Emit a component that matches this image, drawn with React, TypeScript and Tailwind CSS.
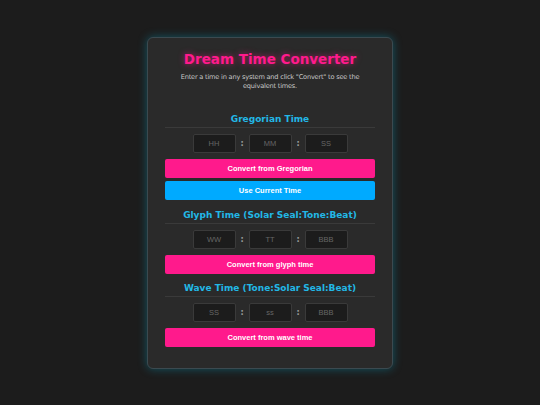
import React from "react";

const Inputs = ({ p }: { p: string[] }) => (
  <div className="mt-[6px] flex items-center justify-center">
    {p.map((x, i) => (
      <React.Fragment key={i}>
        {i > 0 && (
          <span className="w-[13px] text-center text-[8px] font-bold leading-none text-[#9a9a9a]">:</span>
        )}
        <input
          placeholder={x}
          className="block h-[19px] w-[43px] rounded-[2px] border border-[#3a3a3a] bg-[#1c1c1c] text-center text-[7.5px] text-[#ccc] outline-none placeholder:text-[#666]"
          style={{ fontFamily: '"Liberation Sans", Arial, sans-serif' }}
        />
      </React.Fragment>
    ))}
  </div>
);

const Btn = ({ label, blue }: { label: string; blue?: boolean }) => (
  <button
    className={`block h-[19px] w-full rounded-[2px] text-[7.5px] font-bold text-white ${blue ? "bg-[#00aaff]" : "bg-[#ff1a8c]"}`}
    style={{ fontFamily: '"Liberation Sans", Arial, sans-serif' }}
  >
    {label}
  </button>
);

const Heading = ({ t }: { t: string }) => (
  <div className="whitespace-nowrap border-b border-[#3a3a3a] pb-[1px] text-center text-[9px] font-bold leading-[13px] text-[#22b8e6]">
    {t}
  </div>
);

export default function App() {
  return (
    <div
      className="flex min-h-[405px] w-full justify-center bg-[#1c1c1c] pt-[37px]"
      style={{ fontFamily: '"DejaVu Sans", Verdana, sans-serif' }}
    >
      <div className="h-[332px] w-[246px] rounded-[6px] border border-[#3b4a50] bg-[#2a2a2a] px-[17px] pt-[12px] shadow-[0_0_10px_rgba(0,190,230,0.35)]">
        <div className="text-center text-[13.5px] font-bold leading-[18px] text-[#ff1a8c] [text-shadow:0_0_6px_rgba(255,26,140,0.6)]">
          Dream Time Converter
        </div>
        <div className="mx-auto mt-[5px] w-[200px] text-center text-[6.6px] leading-[9px] tracking-[-0.2px] text-[#c8c8c8]">
          Enter a time in any system and click "Convert" to see the equivalent times.
        </div>

        <div className="mt-[22px]">
          <Heading t="Gregorian Time" />
          <Inputs p={["HH", "MM", "SS"]} />
          <div className="mt-[6px] flex flex-col gap-[3px]">
            <Btn label="Convert from Gregorian" />
            <Btn label="Use Current Time" blue />
          </div>
        </div>

        <div className="mt-[9px]">
          <Heading t="Glyph Time (Solar Seal:Tone:Beat)" />
          <Inputs p={["WW", "TT", "BBB"]} />
          <div className="mt-[6px]">
            <Btn label="Convert from glyph time" />
          </div>
        </div>

        <div className="mt-[8px]">
          <Heading t="Wave Time (Tone:Solar Seal:Beat)" />
          <Inputs p={["SS", "ss", "BBB"]} />
          <div className="mt-[6px]">
            <Btn label="Convert from wave time" />
          </div>
        </div>
      </div>
    </div>
  );
}
